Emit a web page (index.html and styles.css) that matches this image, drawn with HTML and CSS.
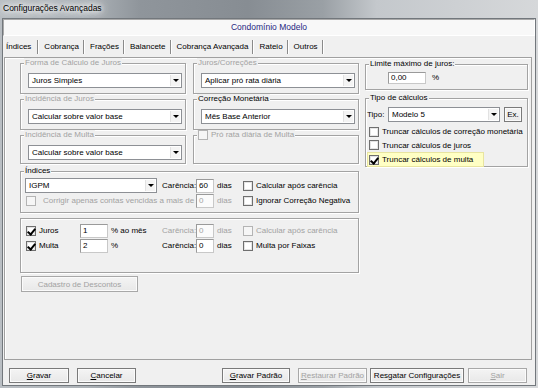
FILE: index.html
```html
<!DOCTYPE html>
<html lang="pt-BR">
<head>
    <meta charset="UTF-8">
    <title>Configurações Avançadas</title>
    <link rel="stylesheet" href="styles.css">
</head>
<body>
    <div class="titlebar"><span>Configurações Avançadas</span></div>

    <div class="client">
        <div class="header">Condomínio Modelo</div>

        <div class="tabs">
            <span class="tab active">Índices</span>
            <span class="tab">Cobrança</span>
            <span class="tab">Frações</span>
            <span class="tab">Balancete</span>
            <span class="tab">Cobrança Avançada</span>
            <span class="tab">Rateio</span>
            <span class="tab">Outros</span>
        </div>

        <div class="tab-panel">
            <div class="left-col">
                <div class="grid-groups">
                    <div class="group">
                        <span class="legend off">Forma de Cálculo de Juros</span>
                        <div class="combo">Juros Simples<span class="arrow"></span></div>
                    </div>
                    <div class="group">
                        <span class="legend off">Juros/Correções</span>
                        <div class="combo">Aplicar pró rata diária<span class="arrow"></span></div>
                    </div>
                    <div class="group">
                        <span class="legend off">Incidência de Juros</span>
                        <div class="combo">Calcular sobre valor base<span class="arrow"></span></div>
                    </div>
                    <div class="group">
                        <span class="legend">Correção Monetária</span>
                        <div class="combo">Mês Base Anterior<span class="arrow"></span></div>
                    </div>
                    <div class="group">
                        <span class="legend off">Incidência de Multa</span>
                        <div class="combo">Calcular sobre valor base<span class="arrow"></span></div>
                    </div>
                    <div class="group">
                        <span class="legend off"><span class="check disabled"></span>Pró rata diária de Multa</span>
                    </div>
                </div>

                <div class="group indices">
                    <span class="legend">Índices</span>
                    <div class="row">
                        <div class="cell-a"><div class="combo short">IGPM<span class="arrow"></span></div></div>
                        <span class="cell-b">Carência:</span>
                        <span class="input num">60</span>
                        <span class="cell-d">dias</span>
                        <label class="opt"><span class="check"></span>Calcular após carência</label>
                    </div>
                    <div class="row">
                        <div class="cell-ab off"><span class="check disabled"></span><span class="far">Corrigir apenas contas vencidas a mais de</span></div>
                        <span class="input num disabled">0</span>
                        <span class="cell-d off">dias</span>
                        <label class="opt"><span class="check"></span>Ignorar Correção Negativa</label>
                    </div>
                </div>

                <div class="group rates">
                    <div class="row">
                        <div class="cell-a">
                            <label class="opt rate"><span class="check on"></span>Juros</label>
                            <span class="input pct">1</span>
                            <span class="unit">% ao mês</span>
                        </div>
                        <span class="cell-b off">Carência:</span>
                        <span class="input num disabled">0</span>
                        <span class="cell-d off">dias</span>
                        <label class="opt off"><span class="check disabled"></span>Calcular após carência</label>
                    </div>
                    <div class="row">
                        <div class="cell-a">
                            <label class="opt rate"><span class="check on"></span>Multa</label>
                            <span class="input pct">2</span>
                            <span class="unit">%</span>
                        </div>
                        <span class="cell-b">Carência:</span>
                        <span class="input num">0</span>
                        <span class="cell-d">dias</span>
                        <label class="opt"><span class="check"></span>Multa por Faixas</label>
                    </div>
                </div>

                <button class="btn off cadastro">Cadastro de Descontos</button>
            </div>

            <div class="right-col">
                <div class="group limite">
                    <span class="legend">Limite máximo de juros:</span>
                    <span class="input juros">0,00</span>
                    <span class="unit">%</span>
                </div>

                <div class="group tipo">
                    <span class="legend">Tipo de cálculos</span>
                    <div class="tipo-row">
                        <span class="tipo-label">Tipo:</span>
                        <div class="combo tipo-combo">Modelo 5<span class="arrow"></span></div>
                        <button class="btn ex">Ex.</button>
                    </div>
                    <label class="opt line"><span class="check"></span>Truncar cálculos de correção monetária</label>
                    <label class="opt line"><span class="check"></span>Truncar cálculos de juros</label>
                    <label class="opt line focus"><span class="check on"></span>Truncar cálculos de multa</label>
                </div>
            </div>
        </div>

        <div class="footer">
            <button class="btn w60"><u>G</u>ravar</button>
            <button class="btn w59 gap8"><u>C</u>ancelar</button>
            <button class="btn w68 push"><u>G</u>ravar Padrão</button>
            <button class="btn off w69 gap8"><u>R</u>estaurar Padrão</button>
            <button class="btn w94 gap3">Resgatar Configurações</button>
            <button class="btn off w59 gap4"><u>S</u>air</button>
        </div>
    </div>
</body>
</html>
```

FILE: styles.css
```css
* {
    margin: 0;
    padding: 0;
    box-sizing: border-box;
}

body {
    width: 538px;
    height: 388px;
    overflow: hidden;
    font-family: "Liberation Sans", Arial, sans-serif;
    font-size: 8px;
    color: #000;
    background: linear-gradient(90deg, #b9bec3 0%, #adb3b8 16%, #8f959b 26%, #878d93 46%, #9aa0a5 60%, #c4c8cc 70%, #d6d8da 100%);
}

/* window title */

.titlebar {
    height: 18px;
    padding-left: 3px;
    line-height: 17px;
    font-size: 8.5px;
    color: #000;
}

.titlebar span {
    text-shadow: 0 0 4px #fff, 0 0 8px #fff, 0 0 10px #fff, 0 0 12px #fff;
}

.client {
    margin: 0 2px;
    height: 368px;
    background: #f0f0f0;
    border: 1px solid #72777c;
}

.header {
    height: 17px;
    line-height: 15px;
    text-align: center;
    font-size: 8.5px;
    color: #26267f;
    background: #f8f8f8;
    border: 1px solid #a9a9a9;
    border-right-color: #fff;
    border-bottom-color: #fff;
}

/* tabs */

.tabs {
    height: 21px;
    display: flex;
    align-items: center;
    padding-left: 1px;
}

.tab {
    height: 14px;
    line-height: 14px;
    padding: 0 4px 0 6px;
    border-right: 1px solid #8a8a8a;
    box-shadow: 1px 0 0 #fff;
}

.tab.active {
    padding: 0 6px 0 2px;
}

.tab-panel {
    margin: 0 3px 0 1px;
    height: 303px;
    border: 1px solid #a0a0a0;
    box-shadow: inset 1px 1px 0 #fff;
    padding: 5px 2px 0 15px;
    display: flex;
    gap: 6px;
}

/* group boxes */

.group {
    position: relative;
    border: 1px solid #a3a3a3;
    box-shadow: inset 1px 1px 0 #fff, 1px 1px 0 #fff;
}

.legend {
    position: absolute;
    top: -6px;
    left: 3px;
    padding: 0 1px;
    line-height: 10px;
    background: #f0f0f0;
    display: flex;
    align-items: center;
    gap: 3px;
}

.off {
    color: #a2a2a2;
}

.left-col {
    width: 339px;
}

.grid-groups {
    display: grid;
    grid-template-columns: 166px 166px;
    grid-template-rows: 31px 31px 29px;
    column-gap: 7px;
    row-gap: 5px;
}

.grid-groups .group {
    padding: 9px 3px 0 7px;
}

/* combo boxes */

.combo {
    position: relative;
    height: 15px;
    line-height: 13px;
    padding-left: 3px;
    background: #fff;
    border: 1px solid #8d9095;
    white-space: nowrap;
}

.arrow {
    position: absolute;
    right: 1px;
    top: 1px;
    width: 10px;
    height: 11px;
    background: #f4f4f4;
    border-left: 1px solid #e2e2e2;
}

.arrow::after {
    content: '';
    position: absolute;
    left: 2px;
    top: 4px;
    border-left: 3px solid transparent;
    border-right: 3px solid transparent;
    border-top: 3px solid #000;
}

.combo.short {
    width: 132px;
}

/* edits */

.input {
    display: inline-block;
    height: 14px;
    line-height: 12px;
    padding-left: 2px;
    background: #fff;
    border: 1px solid #9a9a9a;
    border-right-color: #c8c8c8;
    border-bottom-color: #c8c8c8;
}

.input.num {
    width: 18px;
}

.input.disabled {
    color: #a2a2a2;
    background: #fbfbfb;
}

.input.pct {
    width: 28px;
}

.unit {
    padding-left: 3px;
}

/* check boxes */

.check {
    display: inline-block;
    position: relative;
    width: 10px;
    height: 10px;
    flex: none;
    background: #fff;
    border: 1px solid #6f6f6f;
    box-shadow: inset 0 0 0 1px #e4e4e4;
}

.check.disabled {
    border-color: #b4b4b4;
    background: #f6f6f6;
    box-shadow: none;
}

.check.on::after {
    content: '';
    position: absolute;
    left: 2px;
    top: 0;
    width: 3px;
    height: 6px;
    border: solid #000;
    border-width: 0 2px 2px 0;
    transform: rotate(40deg);
}

.opt {
    display: flex;
    align-items: center;
    gap: 3px;
    white-space: nowrap;
}

/* indices rows */

.indices {
    margin-top: 7px;
    height: 42px;
    padding: 6px 0 0 4px;
}

.rates {
    margin-top: 5px;
    height: 55px;
    padding: 4px 0 0 4px;
}

.row {
    display: flex;
    align-items: center;
    height: 15px;
}

.cell-a {
    width: 137px;
    display: flex;
    align-items: center;
}

.cell-b {
    width: 34px;
    white-space: nowrap;
}

.cell-ab {
    width: 171px;
    display: flex;
    align-items: center;
    padding-left: 1px;
    white-space: nowrap;
}

.far {
    padding-left: 7px;
}

.cell-d {
    width: 29px;
    padding-left: 3px;
}

.rate {
    width: 55px;
    padding-left: 1px;
}

/* buttons */

.btn {
    height: 15px;
    font: inherit;
    color: #000;
    background: linear-gradient(#f4f4f4, #e8e8e8);
    border: 1px solid #7a7a7a;
    box-shadow: inset 0 0 0 1px #fbfbfb;
    text-align: center;
}

.btn.off {
    color: #a2a2a2;
    border-color: #a8a8a8;
}

.cadastro {
    margin: 3px 0 0 1px;
    width: 117px;
    height: 16px;
}

/* right column */

.right-col {
    width: 163px;
}

.limite {
    margin-top: 1px;
    height: 26px;
    padding: 7px 0 0 22px;
    display: flex;
    align-items: flex-start;
}

.limite .input {
    width: 38px;
    height: 12px;
    line-height: 10px;
}

.limite .unit {
    padding-left: 6px;
    line-height: 12px;
}

.tipo {
    margin-top: 8px;
    height: 69px;
    padding: 8px 0 0 1px;
}

.tipo-row {
    display: flex;
    align-items: center;
    margin-bottom: 3px;
}

.tipo-label {
    width: 21px;
}

.tipo-combo {
    width: 112px;
}

.btn.ex {
    width: 18px;
    margin-left: 4px;
}

.line {
    height: 13.5px;
    padding-left: 2px;
    gap: 3px;
}

.focus {
    width: 117px;
    height: 15px;
    background: #ffffc4;
    border: 1px solid #e8e4a0;
    padding-left: 1px;
}

/* footer */

.footer {
    display: flex;
    padding: 8px 8px 0 6px;
}

.w60 { width: 60px; }
.w59 { width: 59px; }
.w68 { width: 68px; }
.w69 { width: 69px; }
.w94 { width: 94px; }
.gap8 { margin-left: 8px; }
.gap4 { margin-left: 4px; }
.gap3 { margin-left: 3px; }
.push { margin-left: auto; }
```
